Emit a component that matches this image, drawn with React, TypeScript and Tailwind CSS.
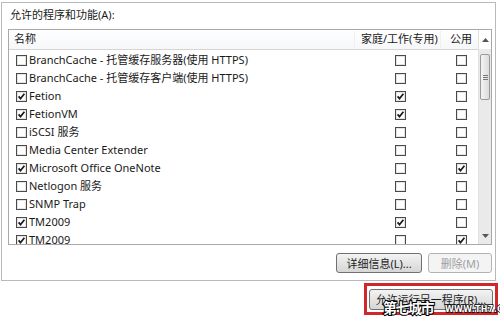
import React from "react";

const font = { fontFamily: '"Noto Sans", "Noto Sans CJK SC", sans-serif' };

function Box({ checked }: { checked: boolean }) {
  return (
    <svg width="11" height="11" viewBox="0 0 11 11" className="shrink-0">
      <rect x="0.5" y="0.5" width="10" height="10" fill="#ffffff" stroke="#4a4a4a" />
      <rect x="1.5" y="1.5" width="8" height="8" fill="none" stroke="#e4e4e4" />
      {checked && (
        <path d="M2.6 5.4 L4.5 7.6 L8.4 2.8" fill="none" stroke="#1a1a1a" strokeWidth="1.7" />
      )}
    </svg>
  );
}

const rows: [string, boolean, boolean, boolean][] = [
  ["BranchCache - 托管缓存服务器(使用 HTTPS)", false, false, false],
  ["BranchCache - 托管缓存客户端(使用 HTTPS)", false, false, false],
  ["Fetion", true, true, false],
  ["FetionVM", true, true, false],
  ["iSCSI 服务", false, false, false],
  ["Media Center Extender", false, false, false],
  ["Microsoft Office OneNote", true, false, true],
  ["Netlogon 服务", false, false, false],
  ["SNMP Trap", false, false, false],
  ["TM2009", true, true, false],
  ["TM2009", true, false, true],
];

export default function App() {
  return (
    <div className="w-[500px] h-[317px] bg-white relative overflow-hidden text-[11px] text-[#1a1a1a]" style={font}>
      <div className="mt-[2px] ml-[1px] w-[495px] h-[279px] border border-[#b9b9b9] flex flex-col">
        <div className="pl-[8px] pt-[4px] h-[26px] leading-[16px]">允许的程序和功能(A):</div>
        <div className="ml-[6px] w-[484px] h-[216px] border border-[#a8a8a8] flex overflow-hidden">
          <div className="flex-1 flex flex-col overflow-hidden">
            <div className="h-[20px] shrink-0 flex items-center border-b border-[#d5d5d5] bg-gradient-to-b from-white to-[#f6f7f9]">
              <div className="flex-1 pl-[5px]">名称</div>
              <div className="w-[86px] pl-[6px] border-l border-[#f0f0f0]">家庭/工作(专用)</div>
              <div className="w-[38px] pl-[9px] border-l border-[#f0f0f0]">公用</div>
            </div>
            <div className="pt-[1px] flex flex-col">
              {rows.map(([name, a, b, c], i) => (
                <div key={i} className="h-[18px] shrink-0 flex items-center">
                  <div className="flex-1 flex items-center pl-[7px] gap-[2px]">
                    <Box checked={a} />
                    <span className="leading-[14px]">{name}</span>
                  </div>
                  <div className="w-[86px] flex pl-[41px]">
                    <Box checked={b} />
                  </div>
                  <div className="w-[38px] flex pl-[16px]">
                    <Box checked={c} />
                  </div>
                </div>
              ))}
            </div>
          </div>
          <div className="w-[13px] shrink-0 flex flex-col bg-[#eaeaea] border-l border-[#e0e0e0]">
            <div className="h-[19px] bg-white flex items-center justify-center">
              <svg width="7" height="4" viewBox="0 0 7 4"><path d="M0 4 L3.5 0 L7 4 Z" fill="#555" /></svg>
            </div>
            <div className="h-[5px]" />
            <div className="h-[46px] mx-[1px] rounded-[2px] border border-[#9a9a9a] bg-gradient-to-r from-[#f4f4f4] to-[#dcdcdc] flex items-center justify-center">
              <div className="flex flex-col gap-[1px]">
                <div className="w-[5px] h-[1px] bg-[#777]" />
                <div className="w-[5px] h-[1px] bg-[#777]" />
                <div className="w-[5px] h-[1px] bg-[#777]" />
              </div>
            </div>
            <div className="flex-1" />
            <div className="h-[17px] flex items-center justify-center">
              <svg width="7" height="4" viewBox="0 0 7 4"><path d="M0 0 L3.5 4 L7 0 Z" fill="#555" /></svg>
            </div>
          </div>
        </div>
        <div className="flex justify-end gap-[6px] pr-[3px] mt-[8px]">
          <button className="w-[86px] h-[20px] rounded-[3px] border border-[#707070] bg-gradient-to-b from-[#f3f3f3] to-[#d6d6d6] text-[#1e1e1e] flex items-center justify-center leading-none">
            详细信息(L)...
          </button>
          <button className="w-[64px] h-[20px] rounded-[3px] border border-[#b3b3b3] bg-[#f4f4f4] text-[#a0a0a0] flex items-center justify-center leading-none">
            删除(M)
          </button>
        </div>
      </div>
      <div className="flex justify-end pr-[2px] mt-[2px]">
        <div className="w-[134px] h-[32px] border-[3px] border-[#d2262b] flex items-center justify-center">
          <button className="w-[124px] h-[21px] rounded-[3px] border border-[#707070] bg-gradient-to-b from-[#f3f3f3] to-[#d6d6d6] text-[#1e1e1e] flex items-center justify-center leading-none">
            允许运行另一程序(R)...
          </button>
        </div>
      </div>
      <div
        className="absolute left-[383px] top-[301px] text-[14px] font-bold text-white leading-none tracking-[-1.5px]"
        style={{ ...font, WebkitTextStroke: "2px #000", paintOrder: "stroke fill" }}
      >
        第七城市
      </div>
      <div
        className="absolute left-[445px] top-[306px] text-[8px] font-bold text-white leading-none tracking-[0.3px]"
        style={{ fontFamily: '"DejaVu Sans", sans-serif', WebkitTextStroke: "1.5px #000", paintOrder: "stroke fill" }}
      >
        WWW.TH7.CN
      </div>
    </div>
  );
}
